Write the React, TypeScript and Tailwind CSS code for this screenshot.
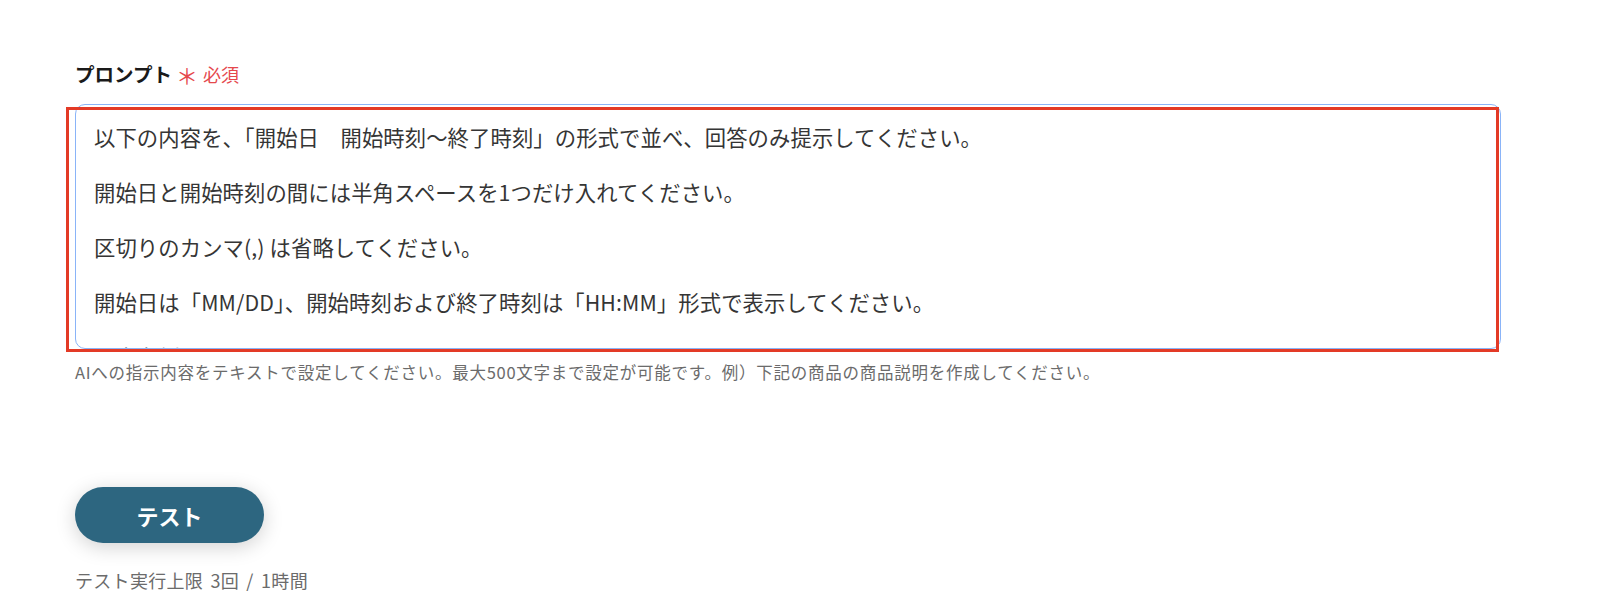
import React from "react";

const font = { fontFamily: '"Noto Sans CJK JP", "Noto Sans", sans-serif' };

export default function App() {
  const text =
    "以下の内容を、「開始日　開始時刻～終了時刻」の形式で並べ、回答のみ提示してください。\n\n開始日と開始時刻の間には半角スペースを1つだけ入れてください。\n\n区切りのカンマ(,) は省略してください。\n\n開始日は「MM/DD」、開始時刻および終了時刻は「HH:MM」形式で表示してください。\n\n　出力例：12/01 10:00～11:00";
  return (
    <div
      className="min-h-[598px] w-full bg-white pl-[75px] pr-[99px] pt-[60px] text-[#333]"
      style={font}
    >
      <div className="flex h-[28px] items-center">
        <span className="text-[19.5px] font-bold text-[#1a1a1a]">プロンプト</span>
        <span className="ml-[4px] text-[22px] leading-none text-[#e5484d]">＊</span>
        <span className="ml-[5px] text-[18px] text-[#e5484d]">必須</span>
      </div>
      <div className="relative mt-[16px]">
        <div className="h-[245px] overflow-hidden rounded-[10px] border border-[#8ab4f8] bg-white px-[18px] pt-[18px]">
          <div className="whitespace-pre-wrap text-[21.33px] leading-[27.5px] tracking-[0.1px] text-[#353535]">
            {text}
          </div>
        </div>
        <div className="pointer-events-none absolute -bottom-[3px] -left-[9px] right-[2px] top-[3px] border-[3px] border-[#e33a26]" />
      </div>
      <div className="mt-[11px] text-[16.5px] leading-[24px] tracking-[0.75px] text-[#6b6b6b]">
        AIへの指示内容をテキストで設定してください。最大500文字まで設定が可能です。例）下記の商品の商品説明を作成してください。
      </div>
      <button className="mt-[103px] flex h-[56px] w-[189px] items-center justify-center rounded-full bg-[#2d6680] text-[22px] font-bold text-white shadow-[0_4px_20px_rgba(0,0,0,0.18)]">
        テスト
      </button>
      <div className="mt-[25px] text-[18px] leading-[24px] tracking-[0.3px] text-[#6b6b6b] [word-spacing:3px]">
        テスト実行上限 3回 / 1時間
      </div>
    </div>
  );
}
